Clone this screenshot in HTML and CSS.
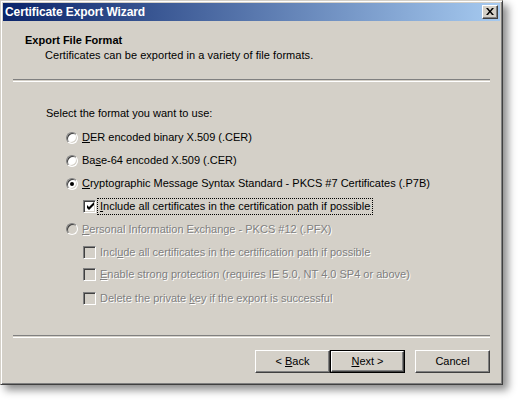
FILE: index.html
```html
<!DOCTYPE html>
<html>
<head>
<meta charset="utf-8">
<link rel="stylesheet" href="styles.css">
</head>
<body>
<div class="window">
  <div class="titlebar">
    <span class="title">Certificate Export Wizard</span>
    <span class="close"><svg width="8" height="7" viewBox="0 0 8 7"><path d="M0 0h2l2 2.5L6 0h2L5 3.5 8 7H6L4 4.5 2 7H0l3-3.5z" fill="#000"/></svg></span>
  </div>
  <div class="content">
    <div class="header">
      <div class="h-title">Export File Format</div>
      <div class="h-sub">Certificates can be exported in a variety of file formats.</div>
    </div>
    <div class="sep"></div>
    <div class="body">
      <div class="prompt">Select the format you want to use:</div>
      <div class="row radio-row">
        <span class="radio"></span><span class="lbl"><u>D</u>ER encoded binary X.509 (.CER)</span>
      </div>
      <div class="row radio-row">
        <span class="radio"></span><span class="lbl">Ba<u>s</u>e-64 encoded X.509 (.CER)</span>
      </div>
      <div class="row radio-row">
        <span class="radio checked"></span><span class="lbl"><u>C</u>ryptographic Message Syntax Standard - PKCS #7 Certificates (.P7B)</span>
      </div>
      <div class="row check-row short">
        <span class="check"><svg width="9" height="9" viewBox="0 0 9 9"><path d="M1 3v3l2 2 5-5V0L3 5z" fill="#000"/></svg></span><span class="lbl focus"><u>I</u>nclude all certificates in the certification path if possible</span>
      </div>
      <div class="row radio-row tall disabled">
        <span class="radio"></span><span class="lbl"><u>P</u>ersonal Information Exchange - PKCS #12 (.PFX)</span>
      </div>
      <div class="row check-row short disabled">
        <span class="check"></span><span class="lbl">Incl<u>u</u>de all certificates in the certification path if possible</span>
      </div>
      <div class="row check-row disabled">
        <span class="check"></span><span class="lbl"><u>E</u>nable strong protection (requires IE 5.0, NT 4.0 SP4 or above)</span>
      </div>
      <div class="row check-row tall disabled">
        <span class="check"></span><span class="lbl">Delete the private <u>k</u>ey if the export is successful</span>
      </div>
    </div>
    <div class="sep"></div>
    <div class="footer">
      <span class="btn"><span>&lt; <u>B</u>ack</span></span>
      <span class="btn default"><span class="btn-inner"><span><u>N</u>ext &gt;</span></span></span>
      <span class="btn cancel"><span>Cancel</span></span>
    </div>
  </div>
</div>
</body>
</html>
```

FILE: styles.css
```css
html, body {
  margin: 0;
  padding: 0;
  background: #ffffff;
}
body {
  width: 519px;
  height: 402px;
  font-family: "Liberation Sans", Arial, sans-serif;
  font-size: 11px;
  color: #000;
}
.window {
  width: 503px;
  height: 385px;
  box-sizing: border-box;
  background: #d4d0c8;
  border: 1px solid;
  border-color: #d4d0c8 #404040 #404040 #d4d0c8;
  box-shadow: inset 1px 1px 0 #ffffff, inset -1px -1px 0 #808080, 5px 5px 8px rgba(0,0,0,0.45);
  padding: 2px;
  display: flex;
  flex-direction: column;
}
.titlebar {
  height: 18px;
  background: linear-gradient(to right, #0a246a, #a6caf0);
  display: flex;
  align-items: center;
  justify-content: space-between;
  padding: 0 2px;
  flex: none;
}
.title {
  color: #fff;
  font-weight: bold;
  font-size: 12px;
  line-height: 14px;
  letter-spacing: -0.1px;
}
.close {
  width: 16px;
  height: 14px;
  box-sizing: border-box;
  background: #d4d0c8;
  border: 1px solid;
  border-color: #ffffff #404040 #404040 #ffffff;
  box-shadow: inset -1px -1px 0 #808080;
  display: flex;
  align-items: center;
  justify-content: center;
  padding: 0 1px 1px 0;
}
.close svg { display: block; }
.content {
  flex: 1;
  display: flex;
  flex-direction: column;
}
.header {
  padding: 13px 0 0 22px;
}
.h-title {
  font-weight: bold;
  line-height: 13px;
}
.h-sub {
  margin-top: 2px;
  padding-left: 20px;
  line-height: 13px;
  letter-spacing: 0.05px;
}
.sep {
  margin: 0 10px;
  height: 1px;
  border-top: 1px solid #808080;
  border-bottom: 1px solid #ffffff;
  flex: none;
}
.header + .sep { margin-top: 17px; }
.body {
  flex: 1;
  padding: 25px 0 0 43px;
}
.prompt {
  line-height: 13px;
  margin-bottom: 6px;
}
.row {
  height: 23px;
  display: flex;
  align-items: center;
}
.row.short { height: 22px; }
.row.tall { height: 24px; }
.radio-row { padding-left: 20px; }
.check-row { padding-left: 37px; }
.radio {
  width: 12px;
  height: 12px;
  box-sizing: border-box;
  border-radius: 50%;
  background: #fff;
  border: 1px solid;
  border-color: #808080 #ffffff #ffffff #808080;
  box-shadow: inset 1px 1px 0 #404040, inset -1px -1px 0 #d4d0c8;
  position: relative;
  flex: none;
}
.radio.checked::after {
  content: "";
  position: absolute;
  left: 3px;
  top: 3px;
  width: 4px;
  height: 4px;
  border-radius: 50%;
  background: #000;
}
.check {
  width: 13px;
  height: 13px;
  box-sizing: border-box;
  background: #fff;
  border: 1px solid;
  border-color: #808080 #ffffff #ffffff #808080;
  box-shadow: inset 1px 1px 0 #404040, inset -1px -1px 0 #d4d0c8;
  display: flex;
  align-items: center;
  justify-content: center;
  flex: none;
}
.check svg { display: block; margin-left: 1px; margin-top: 1px; }
.lbl {
  margin-left: 1px;
  padding: 1px 2px;
  border: 1px dotted transparent;
  line-height: 13px;
  white-space: nowrap;
}
.lbl.focus { border-color: #000; }
.disabled .lbl {
  color: #808080;
  text-shadow: 1px 1px 0 #ffffff;
}
.disabled .radio, .disabled .check { background: #d4d0c8; }
.footer {
  display: flex;
  justify-content: flex-end;
  padding: 12px 10px 9px 0;
  flex: none;
}
.btn {
  width: 75px;
  height: 23px;
  box-sizing: border-box;
  background: #d4d0c8;
  border: 1px solid;
  border-color: #ffffff #404040 #404040 #ffffff;
  box-shadow: inset -1px -1px 0 #808080;
  display: flex;
  align-items: center;
  justify-content: center;
  line-height: 13px;
  white-space: pre;
}
.btn.default {
  border: 1px solid #000;
  box-shadow: none;
  padding: 0;
}
.btn-inner {
  width: 100%;
  height: 100%;
  box-sizing: border-box;
  border: 1px solid;
  border-color: #ffffff #404040 #404040 #ffffff;
  box-shadow: inset -1px -1px 0 #808080;
  display: flex;
  align-items: center;
  justify-content: center;
}
.btn.cancel { margin-left: 10px; }
```
